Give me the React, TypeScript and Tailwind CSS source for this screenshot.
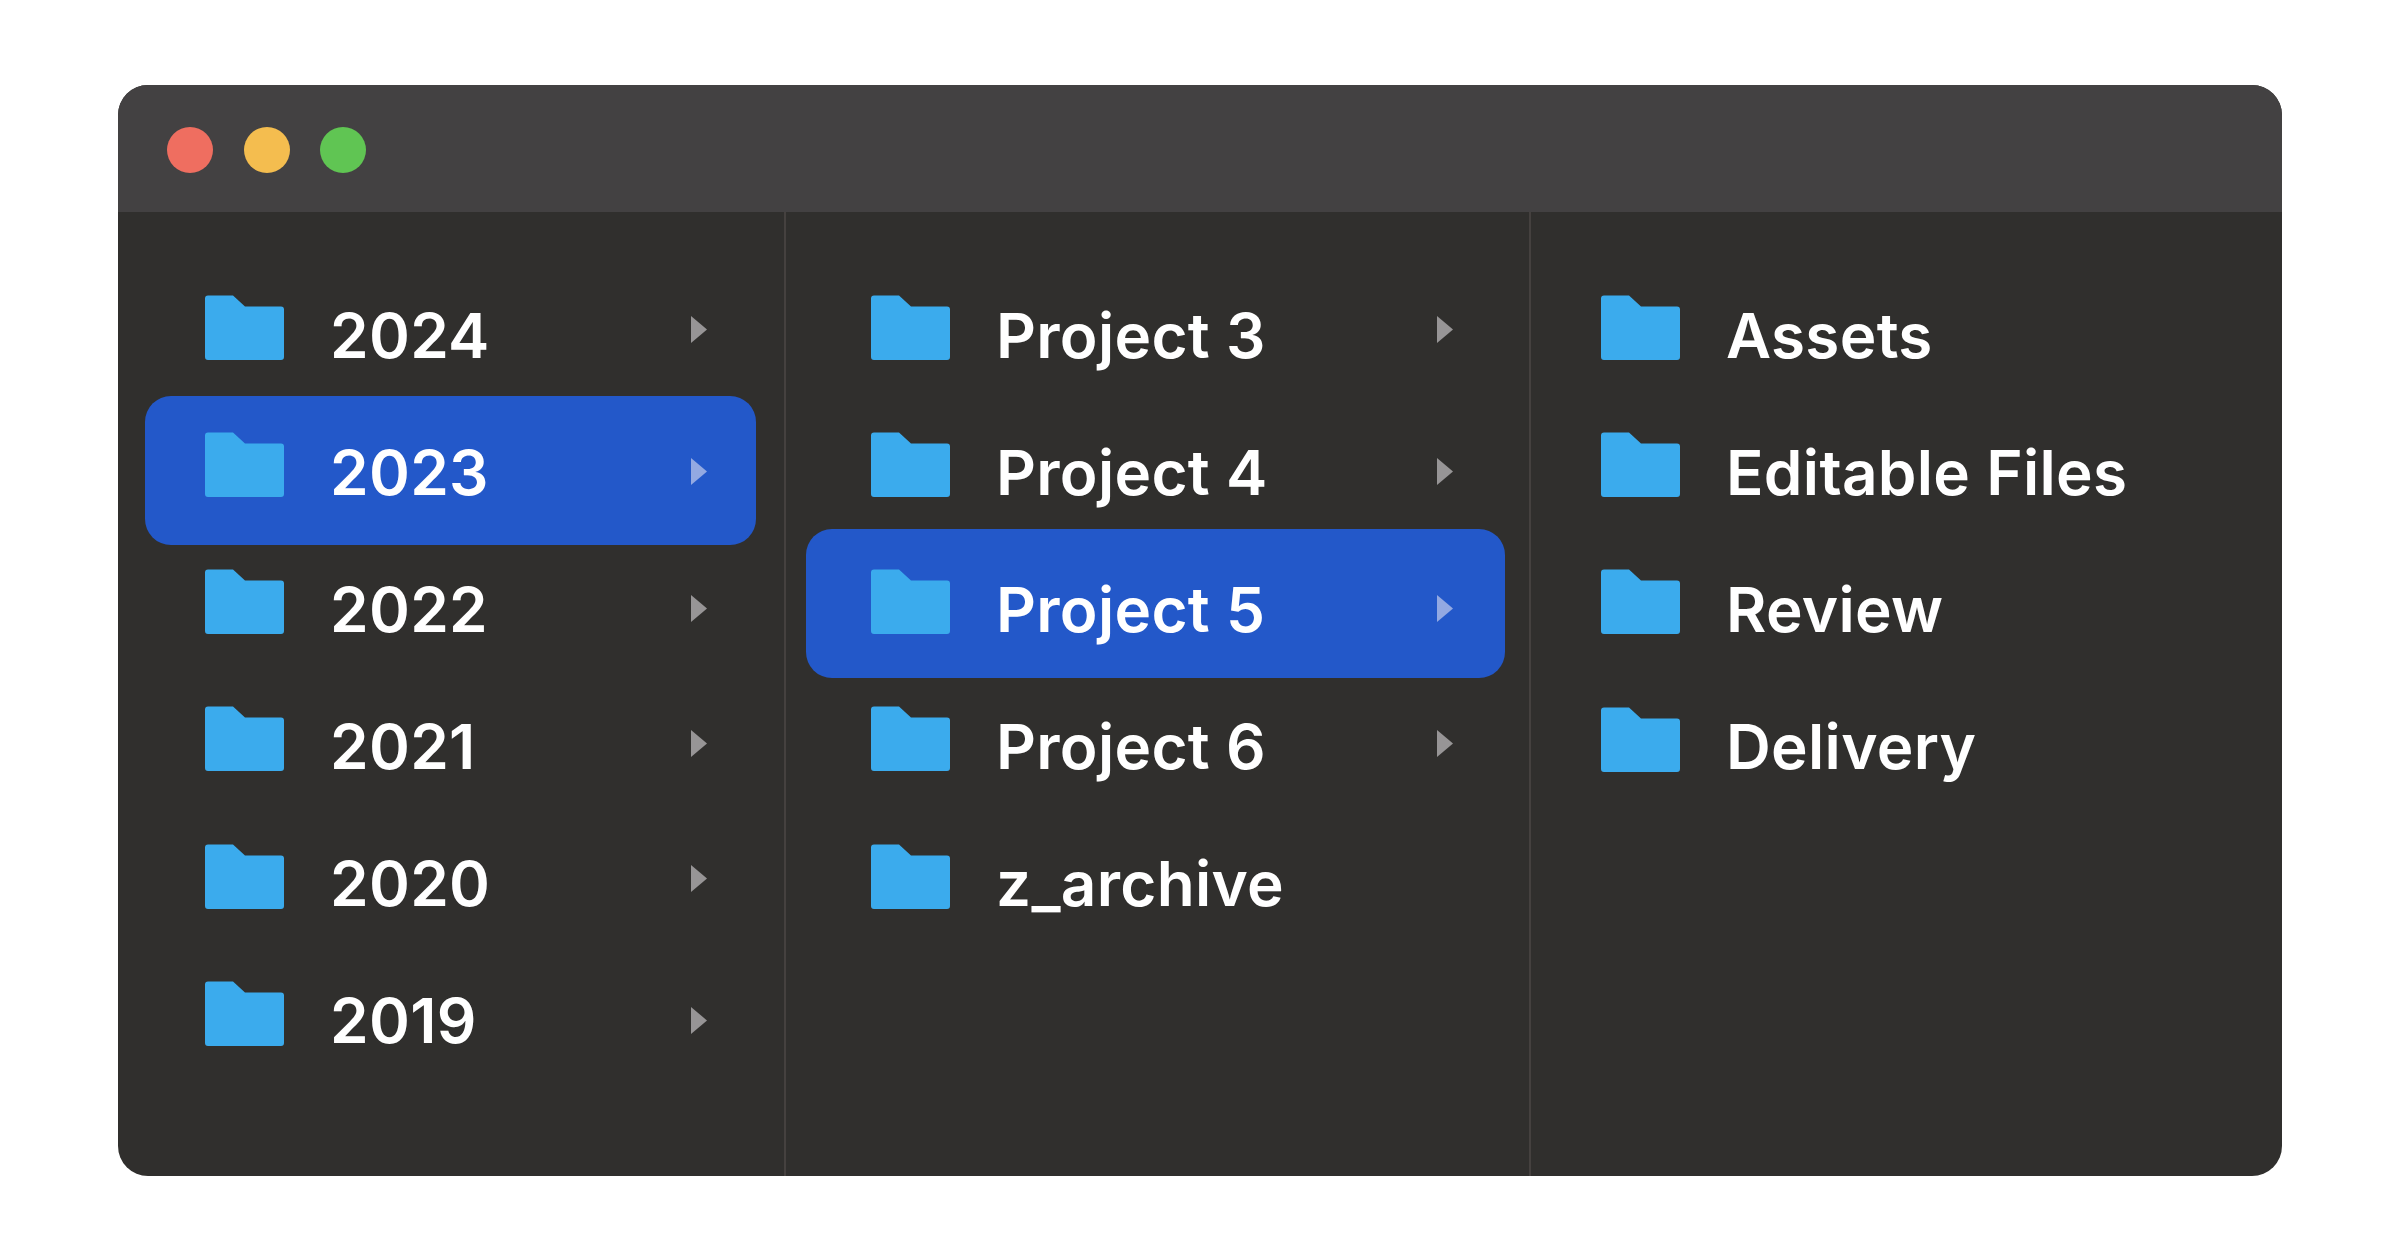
const columns = [
  {
    width: 'w-[668px]',
    inset: 'ml-[27px] mr-[28px]',
    pad: 'pl-[60px] pr-[49px]',
    rows: [
      { name: '2024', arrow: 'mb-[10px]' },
      { name: '2023', arrow: 'mb-0', selected: '-mt-[7px] -mb-[5px] pt-[2px]' },
      { name: '2022', arrow: 'mb-0' },
      { name: '2021', arrow: 'mb-[4px]' },
      { name: '2020', arrow: 'mb-[10px]' },
      { name: '2019', arrow: 'mb-0' },
    ],
  },
  {
    width: 'w-[745px]',
    inset: 'ml-[20px] mr-[24px]',
    pad: 'pl-[65px] pr-[52px]',
    rows: [
      { name: 'Project 3', arrow: 'mb-[10px]' },
      { name: 'Project 4', arrow: 'mb-0' },
      { name: 'Project 5', arrow: 'mb-0', selected: '-mt-[11px] -mb-[1px] pt-[10px]' },
      { name: 'Project 6', arrow: 'mb-[4px]' },
      { name: 'z_archive' },
    ],
  },
  {
    width: 'flex-1',
    inset: 'ml-[20px] mr-[24px]',
    pad: 'pl-[50px] pr-[53px]',
    rows: [{ name: 'Assets' }, { name: 'Editable Files' }, { name: 'Review' }, { name: 'Delivery' }],
  },
];

function Folder() {
  return (
    <svg viewBox="0 0 79 65" className="w-[79px] h-[65px] shrink-0 mb-[14px]">
      <path
        d="M3 0.5H28L40 11.5H76A3 3 0 0 1 79 14.5V62A3 3 0 0 1 76 65H3A3 3 0 0 1 0 62V3.5A3 3 0 0 1 3 0.5Z"
        fill="#3babed"
      />
    </svg>
  );
}

function Arrow({ selected, className }: { selected?: boolean; className?: string }) {
  return (
    <svg viewBox="0 0 16 27" className={`w-[16px] h-[27px] shrink-0 ml-auto ${className}`}>
      <path d="M0 0L16 13.5L0 27Z" fill={selected ? '#93a9e2' : '#979596'} />
    </svg>
  );
}

export default function App() {
  return (
    <div className="w-[2400px] h-[1260px] bg-white pt-[85px] pl-[118px] font-['Inter',sans-serif]">
      <div className="w-[2164px] h-[1091px] rounded-[30px] overflow-hidden bg-[#302f2d] flex flex-col">
        <div className="h-[127px] shrink-0 bg-[#434142] flex items-center pl-[49px] gap-[30.5px] pt-[3px]">
          <div className="w-[46px] h-[46px] rounded-full bg-[#ef6e60]"></div>
          <div className="w-[46px] h-[46px] rounded-full bg-[#f4bd4f]"></div>
          <div className="w-[46px] h-[46px] rounded-full bg-[#60c553]"></div>
        </div>
        <div className="flex flex-1 min-h-0">
          {columns.map((col, i) => (
            <div
              key={i}
              className={`${col.width} pt-[54px] ${i < 2 ? 'border-r-2 border-[#45413f]' : ''}`}
            >
              {col.rows.map((row) => {
                const selected = 'selected' in row ? row.selected : undefined;
                return (
                  <div
                    key={row.name}
                    className={`flex items-center ${col.inset} ${
                      selected ? `h-[149px] bg-[#2358c9] rounded-[26px] ${selected}` : 'h-[137.2px]'
                    }`}
                  >
                    <div className={`flex items-center w-full h-full ${col.pad}`}>
                      <Folder />
                      <span className="ml-[46px] mt-[2px] text-[62px] font-semibold tracking-[0.005em] text-white leading-none whitespace-nowrap">
                        {row.name}
                      </span>
                      {'arrow' in row && <Arrow selected={!!selected} className={row.arrow} />}
                    </div>
                  </div>
                );
              })}
            </div>
          ))}
        </div>
      </div>
    </div>
  );
}
